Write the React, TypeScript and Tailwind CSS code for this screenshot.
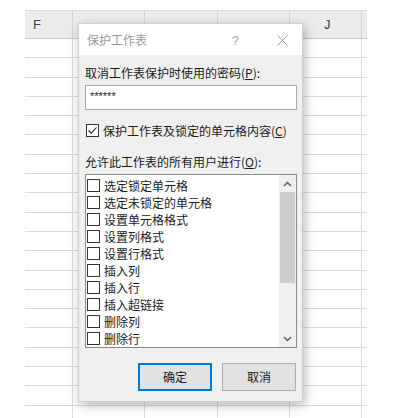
import React from "react";

const cols = [
  { w: 48, label: "F", align: "pl-[8px]" },
  { w: 72, label: "", align: "" },
  { w: 73, label: "", align: "" },
  { w: 72, label: "", align: "" },
  { w: 72, label: "J", align: "pl-[34px]" },
  { w: 5, label: "", align: "" },
];

const items = [
  "选定锁定单元格",
  "选定未锁定的单元格",
  "设置单元格格式",
  "设置列格式",
  "设置行格式",
  "插入列",
  "插入行",
  "插入超链接",
  "删除列",
  "删除行",
];

function Box({ checked }: { checked?: boolean }) {
  return (
    <span className="w-[13px] h-[13px] border border-[#333] bg-white flex items-center justify-center shrink-0">
      {checked && (
        <svg width="11" height="11" viewBox="0 0 11 11">
          <path d="M1.5 5.5 L4.2 8.2 L9.5 2.5" fill="none" stroke="#222" strokeWidth="1.1" />
        </svg>
      )}
    </span>
  );
}

export default function App() {
  const rows = Array.from({ length: 20 });
  return (
    <div
      className="relative w-[411px] h-[418px] overflow-hidden bg-white text-[12px] text-[#1a1a1a]"
      style={{ fontFamily: '"Noto Sans CJK SC", "Noto Sans", sans-serif' }}
    >
      {/* spreadsheet */}
      <div className="pt-[10px] pl-[25px]">
        <div className="w-[342px]">
          <div className="flex h-[29px] bg-[#ececec] border-t border-[#dcdcdc] border-b border-b-[#c6c6c6]">
            {cols.map((c, i) => (
              <div
                key={i}
                className={`h-full flex items-center text-[13px] text-[#444] ${c.align} ${
                  i < cols.length - 1 ? "border-r border-[#d4d4d4]" : ""
                }`}
                style={{ width: c.w, fontFamily: '"Liberation Sans", sans-serif' }}
              >
                {c.label}
              </div>
            ))}
          </div>
          {rows.map((_, r) => (
            <div key={r} className="flex h-[19.3px] border-b border-[#dadada]">
              {cols.map((c, i) => (
                <div
                  key={i}
                  className={`h-full ${i < cols.length - 1 ? "border-r border-[#dadada]" : ""}`}
                  style={{ width: c.w }}
                />
              ))}
            </div>
          ))}
        </div>
      </div>

      {/* dialog */}
      <div className="absolute left-[78px] top-[23px] w-[225px] h-[379px] bg-[#f0f0f0] border border-[#cfcfcf] shadow-[2px_3px_10px_rgba(0,0,0,0.28)] flex flex-col">
        <div className="h-[31px] bg-white flex items-center shrink-0 relative">
          <span className="pl-[8px] text-[#9a9a9a] text-[12px]">保护工作表</span>
          <span className="absolute left-[153px] top-[8px] text-[#a0a0a0] text-[12px]" style={{ fontFamily: '"Liberation Sans", sans-serif' }}>?</span>
          <svg className="absolute left-[198px] top-[11px]" width="11" height="11" viewBox="0 0 11 11">
            <path d="M0.5 0.5 L10.5 10.5 M10.5 0.5 L0.5 10.5" stroke="#9a9a9a" strokeWidth="1" />
          </svg>
        </div>
        <div className="flex flex-col pl-[6px] pr-[5px]">
          <div className="mt-[9px] leading-[17px]">
            取消工作表保护时使用的密码(<span className="underline">P</span>):
          </div>
          <div className="mt-[4px] h-[25px] w-[212px] bg-white border border-[#a9a9a9] pl-[4px] pt-[3px] leading-[14px] text-[11px]" style={{ fontFamily: '"Liberation Sans", sans-serif' }}>
            ******
          </div>
          <div className="mt-[12px] flex items-center gap-[4px] leading-[17px] pl-[1px]">
            <Box checked />
            <span>
              保护工作表及锁定的单元格内容(<span className="underline">C</span>)
            </span>
          </div>
          <div className="mt-[14px] leading-[17px]">
            允许此工作表的所有用户进行(<span className="underline">O</span>):
          </div>
          <div className="mt-[4px] h-[174px] w-[212px] bg-white border border-[#8a8a8a] flex">
            <div className="flex-1 flex flex-col pt-[2px] pl-[1px]">
              {items.map((t) => (
                <div key={t} className="h-[17.1px] flex items-center gap-[4px] leading-[17px]">
                  <Box />
                  <span>{t}</span>
                </div>
              ))}
            </div>
            <div className="w-[17px] bg-[#f0f0f0] flex flex-col items-center">
              <div className="h-[17px] flex items-center justify-center">
                <svg width="9" height="6" viewBox="0 0 9 6">
                  <path d="M1 5 L4.5 1.5 L8 5" fill="none" stroke="#606060" strokeWidth="1.5" />
                </svg>
              </div>
              <div className="w-[15px] h-[91px] bg-[#cdcdcd]" />
              <div className="flex-1" />
              <div className="h-[17px] flex items-center justify-center">
                <svg width="9" height="6" viewBox="0 0 9 6">
                  <path d="M1 1 L4.5 4.5 L8 1" fill="none" stroke="#606060" strokeWidth="1.5" />
                </svg>
              </div>
            </div>
          </div>
          <div className="mt-[15px] flex justify-end gap-[10px] pr-[1px]">
            <button className="w-[74px] h-[28px] bg-[#e1e1e1] border-2 border-[#0078d7] text-[12px] text-[#1a1a1a]">
              确定
            </button>
            <button className="w-[74px] h-[28px] bg-[#e1e1e1] border border-[#adadad] text-[12px] text-[#1a1a1a]">
              取消
            </button>
          </div>
        </div>
      </div>
    </div>
  );
}
